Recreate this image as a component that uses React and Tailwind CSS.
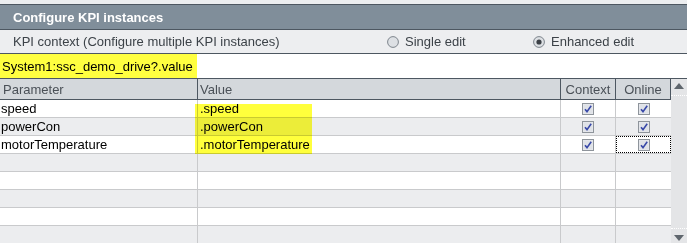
import React from "react";

function Check() {
  return (
    <svg width="12" height="12" viewBox="0 0 12 12" className="block">
      <rect x="0.5" y="0.5" width="11" height="11" fill="#e9ebee" stroke="#8e949b" />
      <rect x="1.5" y="1.5" width="9" height="9" fill="#dfe2e7" />
      <path d="M3 6.2 L5 8.6 L9.2 2.8" fill="none" stroke="#3848a8" strokeWidth="1.6" />
    </svg>
  );
}

function Radio({ checked }) {
  return (
    <svg width="12" height="12" viewBox="0 0 12 12" className="block">
      <circle cx="6" cy="6" r="5.4" fill="#dde0e4" stroke="#7d848c" strokeWidth="1" />
      {checked && <circle cx="6" cy="6" r="2.6" fill="#3b4046" />}
    </svg>
  );
}

const rows = [
  { p: "speed", v: ".speed", c: true },
  { p: "powerCon", v: ".powerCon", c: true },
  { p: "motorTemperature", v: ".motorTemperature", c: true, focus: true },
  {},
  {},
  {},
  {},
  {},
];

export default function App() {
  return (
    <div
      className="w-[687px] h-[243px] overflow-hidden bg-[#eceef0] text-[13px] leading-none"
      style={{ fontFamily: '"Liberation Sans", Arial, sans-serif' }}
    >
      <div className="h-[4px] bg-[#eceef0]" />
      <div className="h-[25px] bg-[#808e9a] border-t border-[#4d5761] flex items-center pl-[13px]">
        <span className="text-white font-bold text-[13px]">Configure KPI instances</span>
      </div>
      <div className="h-[25px] border-t border-b border-[#4d5761] bg-[#edeef0] flex items-center text-[#3c4248]">
        <span className="pl-[13px] w-[387px]">KPI context (Configure multiple KPI instances)</span>
        <div className="flex items-center gap-[6px] w-[146px]">
          <Radio />
          <span>Single edit</span>
        </div>
        <div className="flex items-center gap-[6px]">
          <Radio checked />
          <span>Enhanced edit</span>
        </div>
      </div>
      <div className="h-[25px] bg-white border-b border-[#4d5761] flex">
        <div className="w-[197px] bg-[#ffff40] flex items-center pl-[2px] text-black">
          System1:ssc_demo_drive?.value
        </div>
      </div>
      <div className="flex relative">
        <div className="flex-1 flex flex-col">
          <div className="h-[21px] bg-[#d4d8dc] border-b border-[#4d5761] flex text-[#4a5057]">
            <div className="w-[198px] border-r border-[#4d5761] flex items-center pl-[3px]">Parameter</div>
            <div className="w-[363px] border-r border-[#4d5761] flex items-center pl-[2px]">Value</div>
            <div className="w-[55px] border-r border-[#4d5761] flex items-center justify-center">Context</div>
            <div className="flex-1 border-r border-[#4d5761] flex items-center justify-center">Online</div>
          </div>
          {rows.map((r, i) => (
            <div
              key={i}
              className={`h-[18px] border-b border-[#c9cacc] flex text-black ${i % 2 === 0 ? "bg-white" : "bg-[#ecedef]"}`}
            >
              <div className="w-[198px] border-r border-[#c9cacc] flex items-center pl-[1px]">{r.p}</div>
              <div className="w-[363px] border-r border-[#c9cacc] flex items-center pl-[2px]">{r.v}</div>
              <div className="w-[55px] border-r border-[#c9cacc] flex items-center justify-center">
                {r.c && <Check />}
              </div>
              <div
                className={`flex-1 flex items-center justify-center ${r.focus ? "border border-dotted border-black" : ""}`}
              >
                {r.c && <Check />}
              </div>
            </div>
          ))}
        </div>
        <div className="w-[16px] bg-[#e4e5e7] flex flex-col items-center">
          <svg width="12" height="8" viewBox="0 0 12 8" className="mt-[3px]">
            <path d="M1 7 L6 1 L11 7 Z" fill="#5f666d" />
          </svg>
          <div className="w-full mt-[5px] border-t border-dotted border-white" />
          <div className="flex-1" />
          <div className="w-full mb-[5px] border-t border-dotted border-white" />
          <svg width="12" height="8" viewBox="0 0 12 8" className="mb-[2px]">
            <path d="M1 1 L6 7 L11 1 Z" fill="#5f666d" />
          </svg>
        </div>
        <div className="absolute left-[195px] top-[25px] w-[117px] h-[50px] bg-[#ffff3c] mix-blend-multiply pointer-events-none" />
      </div>
    </div>
  );
}
